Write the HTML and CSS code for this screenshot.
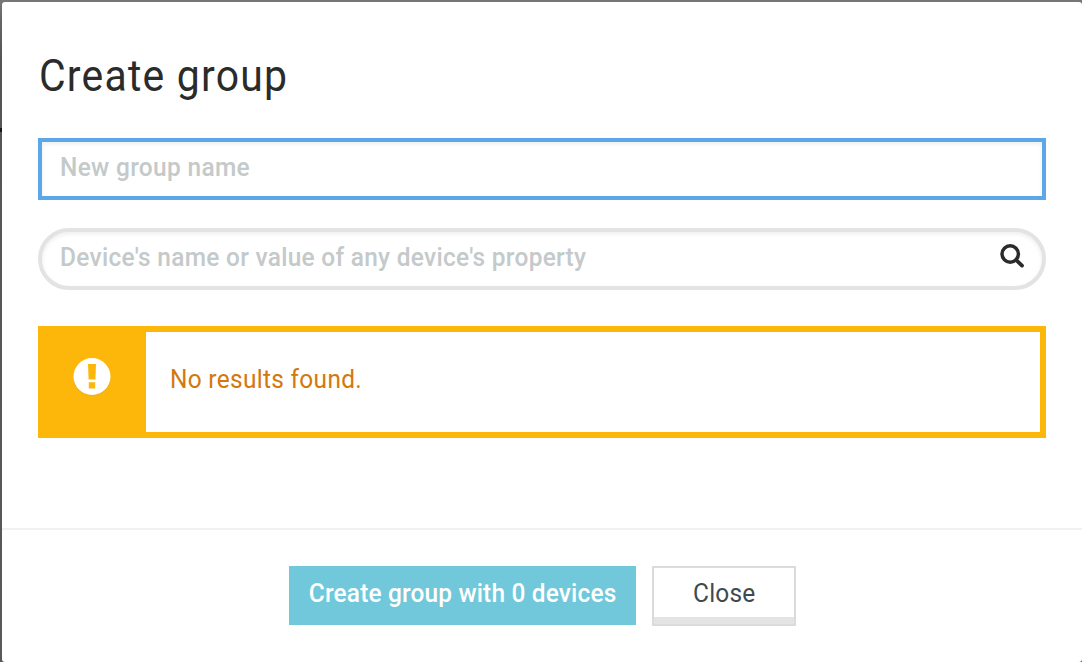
FILE: index.html
```html
<!DOCTYPE html>
<html lang="en">
<head>
<meta charset="utf-8">
<title>Create group</title>
<link rel="stylesheet" href="styles.css">
</head>
<body>
<div class="modal">
  <div class="modal-body">
    <h1 class="title"><span class="narrow title-text">Create group</span></h1>
    <div class="field field-focused"><span class="narrow name-text">New group name</span></div>
    <div class="field field-search">
      <span class="narrow search-text">Device's name or value of any device's property</span>
      <svg class="search-icon" width="26" height="26" viewBox="0 0 26 26" fill="none" stroke="#2b2b2b">
        <circle cx="11.2" cy="11" r="8.2" stroke-width="3.5"/>
        <path d="M17.2 17L23 22.6" stroke-width="3.8" stroke-linecap="round"/>
      </svg>
    </div>
    <div class="alert">
      <div class="alert-icon">
        <svg width="40" height="42" viewBox="0 0 40 42">
          <circle cx="20" cy="21.6" r="18.6" fill="#e5ad2c" opacity=".6"/>
          <circle cx="20" cy="20.5" r="18.5" fill="#fff"/>
          <path d="M16 8h8l-.6 15.5h-6.8zM16.8 26.3h6.4v6.3h-6.4z" fill="#fdb70a"/>
        </svg>
      </div>
      <div class="alert-content"><span class="narrow alert-text">No results found.</span></div>
    </div>
  </div>
  <div class="modal-footer">
    <button class="btn btn-primary"><span class="narrow create-text">Create group with 0 devices</span></button>
    <button class="btn btn-close"><span class="narrow close-text">Close</span></button>
  </div>
</div>
</body>
</html>
```
FILE: styles.css
```css
* { box-sizing: border-box; }
body {
  margin: 0;
  height: 662px;
  overflow: hidden;
  padding: 2px 0 0 2px;
  background:
    linear-gradient(#111820, #111820) 0 128px / 2px 4px no-repeat,
    linear-gradient(#777576 0, #777576 3px, #666 20px, #555 60px, #58595a 100%);
  font-family: Roboto, "Liberation Sans", sans-serif;
}
.modal {
  display: flex;
  flex-direction: column;
  height: 660px;
  background: #fff;
  border-radius: 3px;
}
.modal-body {
  height: 526px;
  padding: 45px 36px 0;
}
/* Condensed lettering with open tracking */
.narrow {
  display: inline-block;
  transform: scaleX(.94);
  transform-origin: 0 50%;
}
.title-text { letter-spacing: 1.3px; }
.name-text { letter-spacing: .36px; }
.search-text { letter-spacing: .31px; }
.alert-text { letter-spacing: .33px; }
.create-text { letter-spacing: .18px; transform-origin: 50% 50%; }
.close-text { letter-spacing: .25px; transform-origin: 50% 50%; }
.title {
  margin: 0 0 31px;
  padding-left: 1px;
  font-size: 43.5px;
  line-height: 60px;
  font-weight: 400;
  color: #2b2b2b;
  white-space: nowrap;
}
.field {
  display: flex;
  justify-content: space-between;
  height: 62px;
  padding: 0 17px 0 18px;
  border: 4px solid #e1e3e5;
  box-shadow: inset 0 2px 4px rgba(0, 0, 0, .07);
  font-size: 26px;
  line-height: 50px;
  font-weight: 500;
  color: #c4c9ca;
  white-space: nowrap;
}
.field-focused { border-color: #5ba7e7; }
.field-search { margin-top: 28px; border-radius: 31px; }
.search-icon { margin-top: 11px; }
.alert {
  display: flex;
  height: 112px;
  margin-top: 36px;
  border: 6px solid #fdb70a;
}
.alert-icon {
  width: 102px;
  padding: 24px 0 0 28px;
  background: #fdb70a;
}
.alert-icon svg { display: block; }
.alert-content {
  padding-left: 24px;
  font-size: 26px;
  line-height: 94px;
  color: #d4780c;
}
.modal-footer {
  display: flex;
  justify-content: center;
  gap: 16px;
  height: 134px;
  padding: 36px 0 0 1px;
  border-top: 2px solid #f1f1f1;
}
.btn {
  margin: 0;
  padding: 0;
  border: 0;
  border-radius: 0;
  font: 400 26px/54px Roboto, "Liberation Sans", sans-serif;
  white-space: nowrap;
}
.btn-primary {
  width: 347px;
  height: 59px;
  padding-bottom: 5px;
  background: #70c8da;
  color: #fff;
  font-weight: 500;
}
.btn-close {
  width: 144px;
  height: 60px;
  padding-bottom: 5px;
  border: 2px solid #d8dcdc;
  background: #fff;
  box-shadow: inset 0 -7px #e4e4e4;
  color: #3f4b50;
  line-height: 51px;
}
```
